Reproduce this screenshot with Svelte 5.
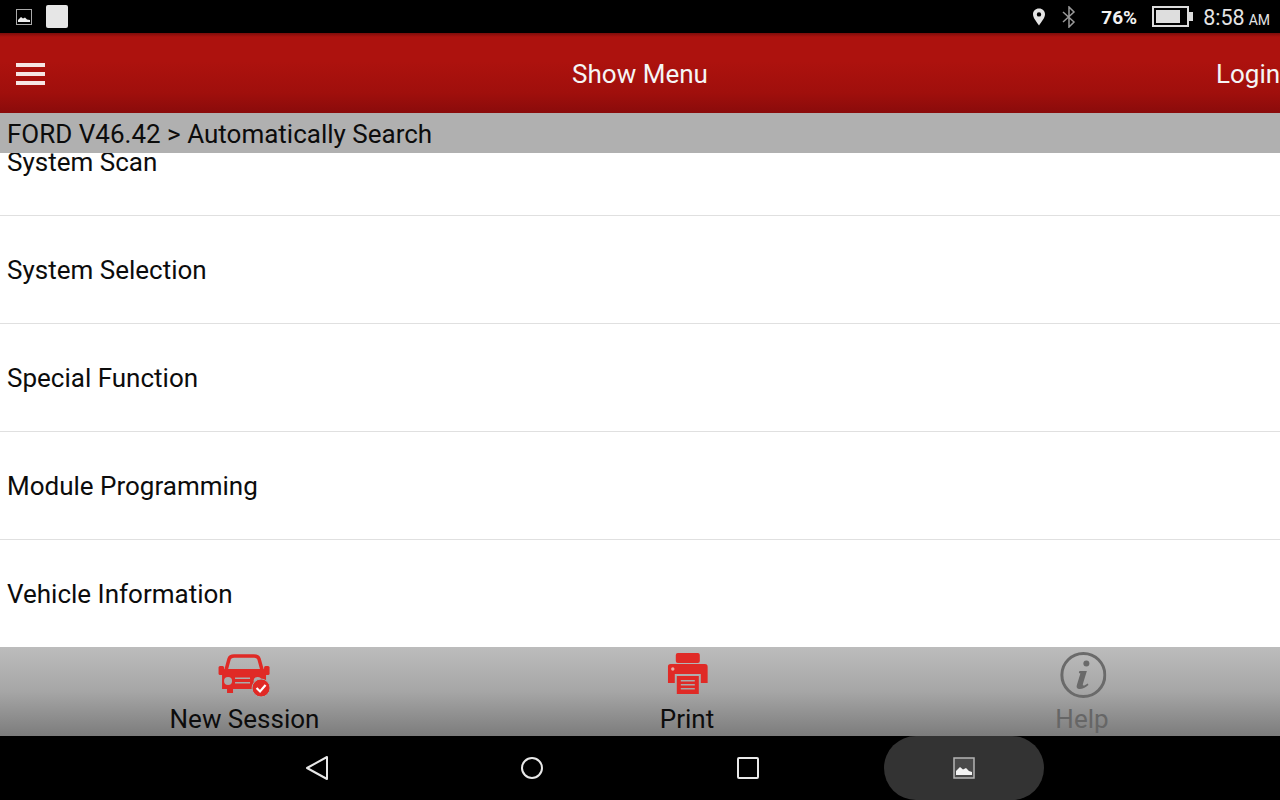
<script lang="ts">
  const rows = ["System Scan", "System Selection", "Special Function", "Module Programming", "Vehicle Information"];
</script>

<div class="screen">
  <div class="statusbar">
    <div class="status-left">
      <svg class="pic" width="16" height="16" viewBox="0 0 16 16" aria-hidden="true">
        <rect x="0.5" y="0.5" width="15" height="15" fill="none" stroke="#aaa" />
        <path d="M2 13 V11 L5 8 L7 9.5 L9 8.5 L11 10.5 L14 11 V13 Z" fill="#eee" />
      </svg>
      <div class="blank"></div>
    </div>
    <div class="status-right">
      <svg class="pin" width="14" height="18" viewBox="0 0 14 18" aria-hidden="true">
        <path fill-rule="evenodd" d="M7 0.5 C3.4 0.5 1 3 1 6.3 C1 10 5 14.5 7 17.5 C9 14.5 13 10 13 6.3 C13 3 10.6 0.5 7 0.5 Z M7 4.2 A2.2 2.2 0 1 1 7 8.6 A2.2 2.2 0 1 1 7 4.2 Z" fill="#e4e4e4" />
      </svg>
      <svg class="bt" width="14" height="22" viewBox="0 0 14 22" aria-hidden="true">
        <path d="M1 6 L12 16 L7 21 V1 L12 6 L1 16" fill="none" stroke="#9a9a9a" stroke-width="1.5" />
      </svg>
      <span class="pct">76%</span>
      <div class="battery"><div class="charge"></div></div>
      <div class="nub"></div>
      <span class="clock">8:58<small>AM</small></span>
    </div>
  </div>

  <header class="appbar">
    <div class="burger"><span></span><span></span><span></span></div>
    <div class="title">Show Menu</div>
    <div class="login">Login</div>
  </header>

  <div class="crumb">FORD V46.42 &gt; Automatically Search</div>

  <main class="list">
    {#each rows as row}
      <div class="row">{row}</div>
    {/each}
  </main>

  <footer class="actions">
    <div class="action">
      <svg width="54" height="48" viewBox="0 -2 54 48" aria-hidden="true">
        <path d="M9 17 L12 6 Q13 3 17 3 H37 Q41 3 42 6 L45 17" fill="none" stroke="#e02a26" stroke-width="3.500" />
        <path fill-rule="evenodd" d="M5 19 Q5 16 8 16 H46 Q49 16 49 19 V36 H44 V40 H38 V36 H16 V40 H10 V36 H5 Z M11 24 A4 4 0 1 0 11 32 A4 4 0 1 0 11 24 Z M40.500 24 A4 4 0 1 0 40.500 32 A4 4 0 1 0 40.500 24 Z M18 24.500 V26 H33 V24.500 Z M18 29 V30.500 H33 V29 Z" fill="#e02a26" />
        <rect x="1.500" y="13" width="5.500" height="9" rx="1.500" fill="#e02a26" />
        <rect x="47" y="13" width="5.500" height="9" rx="1.500" fill="#e02a26" />
        <circle cx="44" cy="35" r="9" fill="#e02a26" stroke="#a8a8a8" stroke-width="1" />
        <path d="M39.500 35 L43 38.500 L48.500 32" fill="none" stroke="#fff" stroke-width="2.200" />
      </svg>
      <span>New Session</span>
    </div>
    <div class="action print">
      <svg width="40" height="48" viewBox="0 -2 40 48" aria-hidden="true">
        <rect x="8" y="0" width="24" height="10" rx="2" fill="#e02a26" />
        <path d="M3 11 H37 Q40 11 40 14 V30 H33 V21 H7 V30 H0 V14 Q0 11 3 11 Z" fill="#e02a26" />
        <circle cx="5" cy="16" r="1.700" fill="#e8b0a8" />
        <path fill-rule="evenodd" d="M9 23 H31 V41 H9 Z M13 27 V28.500 H27 V27 Z M13 31 V32.500 H27 V31 Z M13 35 V36.500 H27 V35 Z" fill="#e02a26" />
      </svg>
      <span>Print</span>
    </div>
    <div class="action off">
      <svg width="48" height="48" viewBox="0 -1 48 48" aria-hidden="true">
        <circle cx="25" cy="23" r="21.500" fill="none" stroke="#6a6a6a" stroke-width="3" />
        <circle cx="28" cy="11.500" r="3" fill="#6a6a6a" />
        <path d="M21 19 H28.500 L24.500 32 Q24 34 26 33.500 L29.500 31.500 L30 33 Q25 37.500 20.500 37 Q17.500 36.500 18.500 33 L22 21.500 L20.500 21 Z" fill="#6a6a6a" />
      </svg>
      <span>Help</span>
    </div>
  </footer>

  <nav class="navbar">
    <svg class="nav-back" width="24" height="26" viewBox="0 0 24 26" aria-hidden="true">
      <path d="M22 2 V24 L2 13 Z" fill="none" stroke="#e8e8e8" stroke-width="2" stroke-linejoin="round" />
    </svg>
    <svg class="nav-home" width="24" height="24" viewBox="0 0 24 24" aria-hidden="true">
      <circle cx="12" cy="12" r="10" fill="none" stroke="#e8e8e8" stroke-width="2" />
    </svg>
    <svg class="nav-recent" width="22" height="22" viewBox="0 0 22 22" aria-hidden="true">
      <rect x="1" y="1" width="20" height="20" rx="1" fill="none" stroke="#e8e8e8" stroke-width="2" />
    </svg>
    <div class="pill">
      <svg width="22" height="22" viewBox="0 0 22 22" aria-hidden="true">
        <rect x="1" y="1" width="20" height="20" fill="#4a4a4a" stroke="#b5b5b5" stroke-width="1.500" />
        <path d="M3 18 V14 L7 10 L10 12.500 L13 11 L16 14 L19 15 V18 Z" fill="#f4f4f4" />
      </svg>
    </div>
  </nav>
</div>

<style>
  :global(body) {
    margin: 0;
    background: #fff;
  }

  .screen {
    display: flex;
    flex-direction: column;
    width: 1280px;
    height: 800px;
    overflow: hidden;
    font-family: Roboto, "Liberation Sans", sans-serif;
    color: #0c0c0c;
  }

  .statusbar {
    flex: 0 0 33px;
    display: flex;
    justify-content: space-between;
    background: #000;
  }

  .status-left {
    display: flex;
    align-items: center;
    gap: 14px;
    padding-left: 16px;
  }

  .blank {
    width: 22px;
    height: 23px;
    border-radius: 2px;
    background: #e6e6e6;
  }

  .status-right {
    display: flex;
    align-items: center;
    padding-right: 10px;
  }

  .pin {
    margin-right: 16px;
  }

  .bt {
    margin-right: 25px;
  }

  .pct {
    margin-right: 15px;
    padding-top: 2px;
    font-size: 19px;
    font-weight: 700;
    color: #f2f2f2;
  }

  .battery {
    box-sizing: border-box;
    width: 37px;
    height: 21px;
    padding: 2px;
    border: 2px solid #dcdcdc;
  }

  .charge {
    width: 24px;
    height: 100%;
    background: #dedede;
  }

  .nub {
    width: 4px;
    height: 9px;
    margin-right: 10px;
    background: #dcdcdc;
  }

  .clock {
    padding-top: 2px;
    font-size: 21.5px;
    color: #e4e4e4;
  }

  .clock small {
    margin-left: 4px;
    font-size: 14px;
  }

  .appbar {
    flex: 0 0 80px;
    box-sizing: border-box;
    position: relative;
    display: flex;
    align-items: center;
    justify-content: space-between;
    padding-top: 2px;
    padding-left: 16px;
    background: linear-gradient(#7c0c0a 0%, #ad120e 5%, #ad120e 35%, #a00f0c 75%, #8a0b0b 100%);
    color: #f5f5f5;
    font-size: 26px;
  }

  .burger {
    display: flex;
    flex-direction: column;
    gap: 5px;
    width: 29px;
  }

  .burger span {
    height: 4px;
    background: #f6e6e4;
  }

  .title {
    position: absolute;
    left: 0;
    right: 0;
    text-align: center;
  }

  .login {
    width: 64px;
    white-space: nowrap;
  }

  .crumb {
    flex: 0 0 40px;
    min-height: 0;
    position: relative;
    z-index: 1;
    box-sizing: border-box;
    padding-left: 7px;
    background: #b0b0b0;
    font-size: 26px;
    line-height: 42px;
  }

  .list {
    flex: 1;
    min-height: 0;
    overflow: hidden;
  }

  .row {
    box-sizing: border-box;
    height: 108px;
    padding-left: 7px;
    border-bottom: 1px solid #e0e0e0;
    font-size: 26px;
    line-height: 108px;
  }

  .row:first-child {
    margin-top: -45px;
  }

  .actions {
    flex: 0 0 89px;
    position: relative;
    background: linear-gradient(#bcbcbc 0%, #a6a6a6 50%, #7c7c7c 100%);
    font-size: 26px;
  }

  .action {
    position: absolute;
    top: 4px;
    display: flex;
    flex-direction: column;
    align-items: center;
    transform: translateX(-50%);
    white-space: nowrap;
  }

  .action:nth-child(1) {
    left: 244.5px;
  }

  .action:nth-child(2) {
    left: 687px;
  }

  .action:nth-child(3) {
    left: 1082px;
  }

  .action svg {
    display: block;
  }

  .print svg {
    margin-left: 2px;
  }

  .action span {
    margin-top: 5px;
    line-height: 30px;
  }

  .off {
    color: #666;
  }

  .navbar {
    flex: 0 0 64px;
    position: relative;
    background: #000;
  }

  .navbar svg {
    display: block;
  }

  .nav-back,
  .nav-home,
  .nav-recent,
  .pill {
    position: absolute;
  }

  .nav-back {
    left: 305px;
    top: 19px;
  }

  .nav-home {
    left: 520px;
    top: 20px;
  }

  .nav-recent {
    left: 737px;
    top: 21px;
  }

  .pill {
    left: 884px;
    top: 0;
    display: flex;
    align-items: center;
    justify-content: center;
    width: 160px;
    height: 64px;
    border-radius: 32px;
    background: #333;
  }
</style>
